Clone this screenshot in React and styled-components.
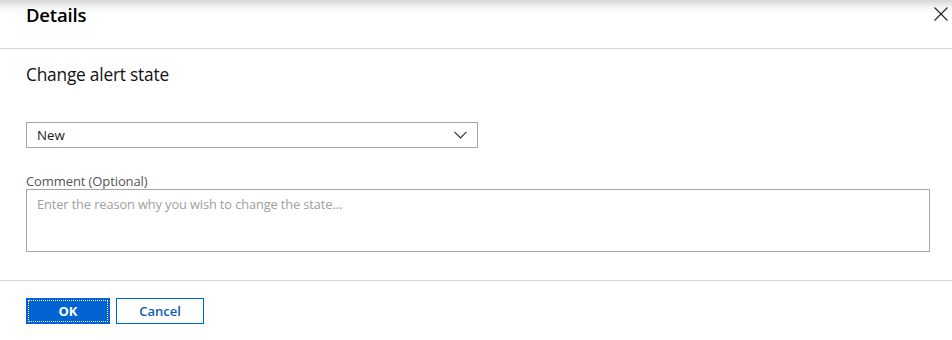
import React from "react";
import styled, { createGlobalStyle } from "styled-components";

const Global = createGlobalStyle`
  html, body {
    margin: 0;
    padding: 0;
    background: #fff;
    font-family: "Open Sans", "Noto Sans", sans-serif;
    color: #000;
  }
`;

const Panel = styled.div`
  width: 952px;
  height: 340px;
  display: flex;
  flex-direction: column;
  background: linear-gradient(to bottom, #d6d6d6 0px, #f4f4f4 7px, #ffffff 14px);
`;

const Header = styled.header`
  height: 49px;
  box-sizing: border-box;
  display: flex;
  align-items: flex-start;
  justify-content: space-between;
  padding: 3px 0 0 26px;
  border-bottom: 1px solid #d6d6d6;
`;

const Title = styled.h1`
  margin: 0;
  font-size: 18.5px;
  font-weight: 600;
  letter-spacing: -0.2px;
  line-height: 24px;
`;

const Close = styled.button`
  border: 0;
  background: none;
  padding: 4px;
  margin: 0;
  display: flex;
  cursor: pointer;
`;

const Body = styled.div`
  padding: 15px 22px 0 26px;
  height: 232px;
  box-sizing: border-box;
  border-bottom: 1px solid #d6d6d6;
  display: flex;
  flex-direction: column;
`;

const Heading = styled.h2`
  margin: 0 0 36px;
  font-size: 17.3px;
  font-weight: 400;
  line-height: 22px;
  letter-spacing: -0.2px;
  color: #111;
`;

const Select = styled.div`
  width: 452px;
  height: 26px;
  box-sizing: border-box;
  border: 1px solid #a6a6a6;
  display: flex;
  align-items: center;
  justify-content: space-between;
  padding: 0 10px 0 10px;
  font-size: 13.3px;
  color: #222;
`;

const Label = styled.label`
  margin-top: 25px;
  font-size: 13px;
  color: #555;
  line-height: 16px;
  letter-spacing: -0.1px;
`;

const TextArea = styled.textarea`
  margin-top: 0;
  width: 904px;
  height: 63px;
  box-sizing: border-box;
  border: 1px solid #a6a6a6;
  resize: none;
  padding: 5px 10px;
  font-family: inherit;
  font-size: 12.8px;
  letter-spacing: -0.1px;
  outline: none;
  &::placeholder {
    color: #a0a0a0;
  }
`;

const Footer = styled.div`
  display: flex;
  gap: 6px;
  padding: 17px 26px 0;
`;

const Button = styled.button`
  height: 26px;
  box-sizing: border-box;
  width: ${({ $w }) => $w}px;
  font-family: inherit;
  font-size: 13px;
  font-weight: ${({ $primary }) => ($primary ? 700 : 600)};
  border: 1px solid #0063d1;
  background: ${({ $primary }) => ($primary ? "#0063d1" : "#fff")};
  color: ${({ $primary }) => ($primary ? "#fff" : "#0f5bb5")};
  outline: ${({ $primary }) => ($primary ? "1px dotted #fff" : "none")};
  outline-offset: -3px;
  padding: 0;
  cursor: pointer;
`;

export default function App() {
  return (
    <>
      <Global />
      <Panel>
        <Header>
          <Title>Details</Title>
          <Close aria-label="Close">
            <svg width="14" height="14" viewBox="0 0 14 14">
              <path d="M0.5 0.5 L13.5 13.5 M13.5 0.5 L0.5 13.5" stroke="#222" strokeWidth="1.1" fill="none" />
            </svg>
          </Close>
        </Header>
        <Body>
          <Heading>Change alert state</Heading>
          <Select>
            <span>New</span>
            <svg width="13" height="8" viewBox="0 0 13 8">
              <path d="M0.5 0.8 L6.5 6.8 L12.5 0.8" stroke="#333" strokeWidth="1.2" fill="none" />
            </svg>
          </Select>
          <Label>Comment (Optional)</Label>
          <TextArea placeholder="Enter the reason why you wish to change the state..." />
        </Body>
        <Footer>
          <Button $primary $w={84}>OK</Button>
          <Button $w={88}>Cancel</Button>
        </Footer>
      </Panel>
    </>
  );
}
